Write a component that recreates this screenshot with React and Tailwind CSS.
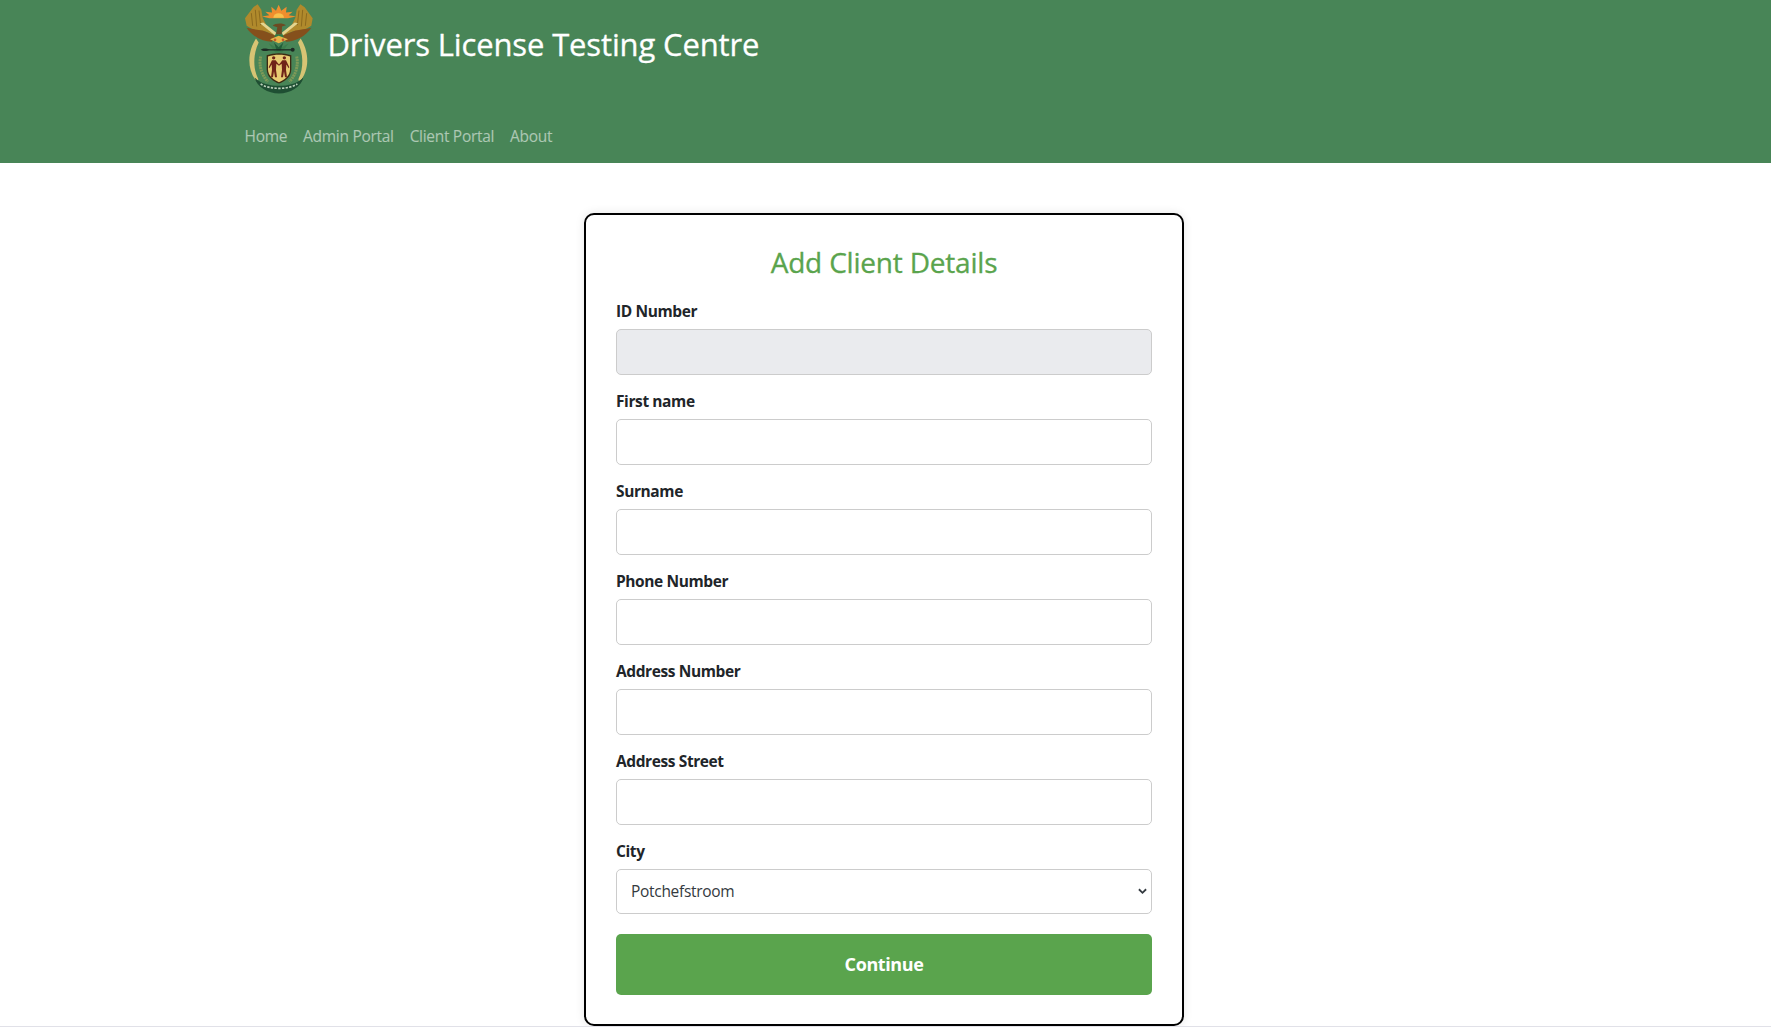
function Logo() {
  return (
    <svg viewBox="37 10 204 272" className="w-[68px] h-[91px] block shrink-0">
      {/* sun */}
      <path d="M138 15 L146 33 L162 21 L160 38 L180 36 L168 46 L190 50 L166 55 H110 L88 50 L110 46 L98 36 L118 38 L116 21 L130 33 Z" fill="#ef8e2e" />
      <path d="M122 54 a16 14 0 0 1 32 0 Z" fill="#f7c14c" />
      {/* wings gold */}
      <path d="M62 22 L75 13 L86 30 L90 54 L100 74 L125 96 L128 108 L100 96 L62 90 L42 78 L37 55 Z" fill="#b08a2c" />
      <path d="M216 22 L203 13 L192 30 L188 54 L178 74 L153 96 L150 108 L178 96 L216 90 L236 78 L240 55 Z" fill="#b08a2c" />
      <path d="M56 40 L60 78 M68 30 L72 80 M79 32 L84 76" stroke="#8c6a1e" strokeWidth="3" fill="none" />
      <path d="M222 40 L218 78 M210 30 L206 80 M199 32 L194 76" stroke="#8c6a1e" strokeWidth="3" fill="none" />
      {/* wing brown lower */}
      <path d="M42 84 C60 88 76 90 90 92 L130 108 L118 126 C92 126 58 110 42 84 Z" fill="#85501c" />
      <path d="M236 84 C218 88 202 90 188 92 L148 108 L160 126 C186 126 220 110 236 84 Z" fill="#85501c" />
      {/* wing pale strip */}
      <path d="M82 70 L92 68 L130 98 L128 108 Z" fill="#e3d590" />
      <path d="M196 70 L186 68 L148 98 L150 108 Z" fill="#e3d590" />
      {/* head and body */}
      <path d="M120 78 C126 70 150 68 160 76 L148 80 L147 104 L130 104 L134 82 Z" fill="#6d4a22" />
      <path d="M128 104 H150 L154 116 H124 Z" fill="#2f7a45" />
      <path d="M112 118 L138 108 L166 118 L138 130 Z" fill="#e6b548" />
      <circle cx="127" cy="120" r="4" fill="#c6562a" />
      <circle cx="151" cy="120" r="4" fill="#c6562a" />
      {/* tusks */}
      <path d="M70 116 C48 150 40 200 68 240 C76 248 78 240 76 236 C60 205 62 160 78 128 Z" fill="#d7c474" />
      <path d="M204 116 C226 150 234 200 206 240 C198 248 196 240 198 236 C214 205 212 160 196 128 Z" fill="#d7c474" />
      {/* wheat */}
      <path d="M84 170 C78 195 86 225 106 246" stroke="#7f9a58" strokeWidth="9" strokeDasharray="6 2" fill="none" />
      <path d="M192 170 C198 195 190 225 170 246" stroke="#7f9a58" strokeWidth="9" strokeDasharray="6 2" fill="none" />
      {/* protea / leaves */}
      <path d="M108 130 L138 148 L168 130 L148 158 H128 Z" fill="#3c7d4c" />
      <path d="M124 128 L138 142 L152 128 L144 152 H132 Z" fill="#225c38" />
      {/* spear */}
      <path d="M94 150 H182" stroke="#1d2b24" strokeWidth="4" />
      <path d="M84 150 C92 144 104 146 110 150 C104 154 92 156 84 150 Z" fill="#1d2b24" />
      <circle cx="180" cy="150" r="6" fill="#1d2b24" />
      {/* shield */}
      <path d="M102 166 C125 158 152 158 176 166 L176 208 C176 232 156 244 139 251 C122 244 102 232 102 208 Z" fill="#3d2a12" />
      <path d="M106 170 C126 163 152 163 172 170 L172 208 C172 229 154 240 139 247 C124 240 106 229 106 208 Z" fill="#e7cb73" />
      {/* figures */}
      <g fill="#6f2318">
        <circle cx="123" cy="174" r="5" />
        <path d="M118 181 H129 L134 188 L139 194 V198 L131 192 L130 210 L133 232 H127 L124 214 L121 232 H115 L118 210 L117 194 L110 205 L108 202 Z" />
        <circle cx="155" cy="174" r="5" />
        <path d="M149 181 H160 L170 202 L168 205 L161 194 L160 210 L163 232 H157 L154 214 L151 232 H145 L148 210 L147 192 L139 198 V194 L144 188 Z" />
      </g>
      {/* ribbon */}
      <path d="M66 233 C85 252 112 258 139 258 C166 258 193 252 212 233 C206 262 172 281 139 281 C106 281 72 262 66 233 Z" fill="#1f4f33" />
      <path d="M84 252 C108 270 170 270 194 252" stroke="#bcd0ba" strokeWidth="5" strokeDasharray="7 4" fill="none" />
    </svg>
  );
}

const fields = [
  { label: "ID Number", disabled: true },
  { label: "First name" },
  { label: "Surname" },
  { label: "Phone Number" },
  { label: "Address Number" },
  { label: "Address Street" },
];

export default function App() {
  return (
    <div className="h-[1027px] box-border border-b border-[#e1e1e8] bg-white font-['Open_Sans','Noto_Sans',sans-serif] text-[#212529] overflow-hidden">
      <header className="h-[163px] bg-[#488557]">
        <div className="w-[1320px] mx-auto pl-[19px]">
          <div className="flex items-start h-[124px] pt-[3px]">
            <Logo />
            <h1 className="ml-[15px] mt-[19px] text-[31px] leading-[44px] font-normal text-white tracking-[-0.14px] [-webkit-text-stroke:0.3px_white] whitespace-nowrap">
              Drivers License Testing Centre
            </h1>
          </div>
          <nav className="flex gap-4 text-[15.5px] leading-6 text-white/55 tracking-[-0.3px]">
            <a>Home</a>
            <a>Admin Portal</a>
            <a>Client Portal</a>
            <a>About</a>
          </nav>
        </div>
      </header>
      <main className="flex justify-center pt-[50px] pr-[3px]">
        <div className="w-[600px] h-[813px] border-2 border-black rounded-[10px] px-[30px] pt-[30px] shadow-[0_0_10px_rgba(0,0,0,0.1)] bg-white">
          <h2 className="text-center text-[28px] leading-[34px] text-[#5aa44d] tracking-[-0.2px] [-webkit-text-stroke:0.3px_#5aa44d] mb-[22px]">
            Add Client Details
          </h2>
          {fields.map((f) => (
            <div key={f.label} className="mb-[16px]">
              <label className="block text-[15.5px] leading-[21px] font-bold tracking-[-0.4px] mb-[7px]">{f.label}</label>
              <input
                disabled={f.disabled}
                className={`block w-full h-[46px] border border-[#cccccc] rounded-[5px] ${f.disabled ? "bg-[#eaebee]" : "bg-white"}`}
              />
            </div>
          ))}
          <div className="mb-[20px]">
            <label className="block text-[15.5px] leading-[21px] font-bold tracking-[-0.4px] mb-[7px]">City</label>
            <div className="relative">
              <select className="block w-full h-[45px] border border-[#cccccc] rounded-[5px] bg-white pl-[14px] text-[15.5px] tracking-[-0.3px] text-[#343a40] appearance-none">
                <option>Potchefstroom</option>
              </select>
              <svg viewBox="0 0 10 7" className="absolute right-[5px] top-[19px] w-[9px] h-[7px]" fill="none" stroke="#343a40" strokeWidth="2">
                <path d="M1 1 L5 5 L9 1" />
              </svg>
            </div>
          </div>
          <button className="block w-full h-[61px] rounded-[5px] bg-[#5aa44d] text-white text-[18px] font-bold tracking-[-0.4px]">
            Continue
          </button>
        </div>
      </main>
    </div>
  );
}
